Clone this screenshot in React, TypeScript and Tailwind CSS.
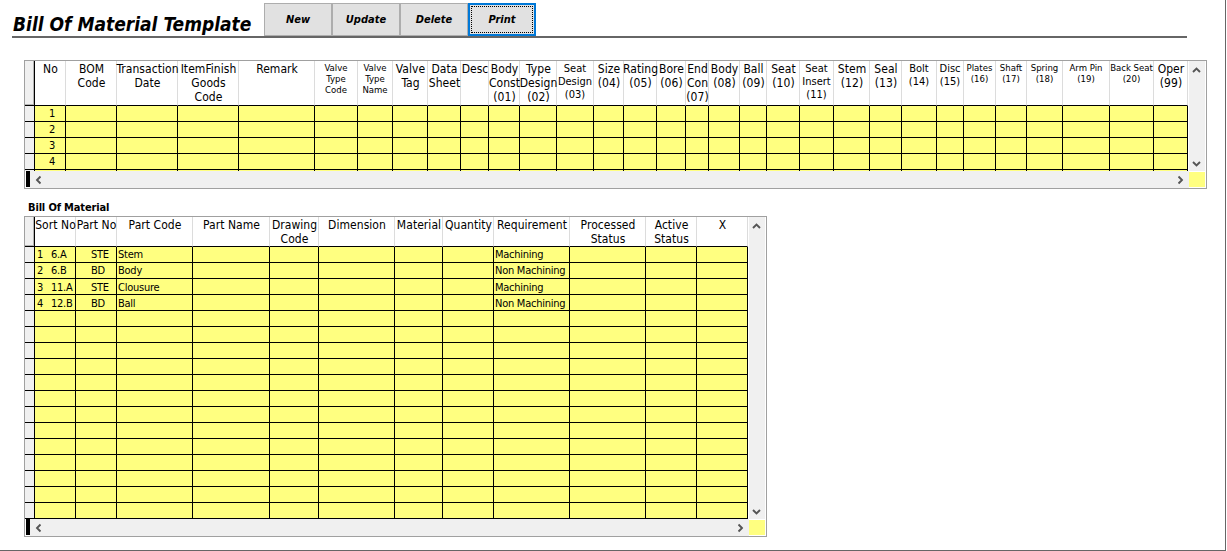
import type { ReactNode } from "react";

type Size = "lg" | "md" | "sm";

interface Column {
  lines: string[];
  size?: Size;
}

const sizeClass: Record<Size, string> = {
  lg: "text-[12px] leading-[14px] tracking-[0.05px] pt-px pl-px",
  md: "text-[11px] leading-[13px] pt-px",
  sm: "text-[9.5px] leading-[11px] pt-px",
};

const templateColumns: Column[] = [
  { lines: ["No"] },
  { lines: ["BOM", "Code"] },
  { lines: ["Transaction", "Date"] },
  { lines: ["ItemFinish", "Goods", "Code"] },
  { lines: ["Remark"] },
  { lines: ["Valve", "Type", "Code"], size: "sm" },
  { lines: ["Valve", "Type", "Name"], size: "sm" },
  { lines: ["Valve", "Tag"] },
  { lines: ["Data", "Sheet"] },
  { lines: ["Desc"] },
  { lines: ["Body", "Const", "(01)"] },
  { lines: ["Type", "Design", "(02)"] },
  { lines: ["Seat", "Design", "(03)"], size: "md" },
  { lines: ["Size", "(04)"] },
  { lines: ["Rating", "(05)"] },
  { lines: ["Bore", "(06)"] },
  { lines: ["End", "Con", "(07)"] },
  { lines: ["Body", "(08)"] },
  { lines: ["Ball", "(09)"] },
  { lines: ["Seat", "(10)"] },
  { lines: ["Seat", "Insert", "(11)"], size: "md" },
  { lines: ["Stem", "(12)"] },
  { lines: ["Seal", "(13)"] },
  { lines: ["Bolt", "(14)"], size: "md" },
  { lines: ["Disc", "(15)"], size: "md" },
  { lines: ["Plates", "(16)"], size: "sm" },
  { lines: ["Shaft", "(17)"], size: "sm" },
  { lines: ["Spring", "(18)"], size: "sm" },
  { lines: ["Arm Pin", "(19)"], size: "sm" },
  { lines: ["Back Seat", "(20)"], size: "sm" },
  { lines: ["Oper", "(99)"] },
];

const materialColumns: Column[] = [
  { lines: ["Sort No"] },
  { lines: ["Part No"] },
  { lines: ["Part Code"] },
  { lines: ["Part Name"] },
  { lines: ["Drawing", "Code"] },
  { lines: ["Dimension"] },
  { lines: ["Material"] },
  { lines: ["Quantity"] },
  { lines: ["Requirement"] },
  { lines: ["Processed", "Status"] },
  { lines: ["Active", "Status"] },
  { lines: ["X"] },
];

const materials = [
  { sort: "1", no: "6.A", kind: "STE", name: "Stem", requirement: "Machining", offset: "" },
  { sort: "2", no: "6.B", kind: "BD", name: "Body", requirement: "Non Machining", offset: "" },
  { sort: "3", no: "11.A", kind: "STE", name: "Clousure", requirement: "Machining", offset: "pt-px" },
  { sort: "4", no: "12.B", kind: "BD", name: "Ball", requirement: "Non Machining", offset: "pt-px" },
];

const templateGrid =
  "grid grid-cols-[10px_31px_51px_61px_61px_76px_43px_35px_35px_33px_28px_31px_37px_37px_30px_33px_29px_23px_31px_27px_33px_34px_36px_32px_35px_27px_32px_31px_36px_47px_44px_34px]";
const materialGrid =
  "grid grid-cols-[10px_41px_41px_76px_77px_49px_76px_48px_51px_76px_76px_51px_51px]";

function Chevron({ turn = "" }: { turn?: string }) {
  return (
    <svg viewBox="0 0 9 6" className={`h-[6px] w-[9px] ${turn}`} fill="none" stroke="#555" strokeWidth="1.9">
      <path d="M1 5 4.5 1.5 8 5" />
    </svg>
  );
}

function HeaderRow({ grid, height, columns }: { grid: string; height: string; columns: Column[] }) {
  return (
    <div className={`${grid} ${height}`}>
      <div className="border-r border-b border-black bg-[#f0f0f0] shadow-[inset_-1px_-1px_0_#b4b4b4]" />
      {columns.map((column, i) => (
        <div
          key={i}
          className={`flex flex-col items-center whitespace-nowrap border-r border-b border-r-[#dcdcdc] border-b-black ${sizeClass[column.size ?? "lg"]}`}
        >
          {column.lines.map((line) => (
            <span key={line}>{line}</span>
          ))}
        </div>
      ))}
    </div>
  );
}

function Row({ grid, count, cells = {}, height = "h-4" }: { grid: string; count: number; cells?: Record<number, ReactNode>; height?: string }) {
  const line = height === "h-4" ? "border-b" : "";
  return (
    <div className={`${grid} ${height}`}>
      <div className={`border-r border-black bg-[#f0f0f0] ${line}`} />
      {Array.from({ length: count }, (_, i) => (
        <div key={i} className={`whitespace-nowrap border-r border-black bg-[#ffff80] text-[11px] leading-[15px] tracking-[-0.25px] ${line}`}>
          {cells[i]}
        </div>
      ))}
    </div>
  );
}

function VerticalBar() {
  return (
    <div className="ml-px flex w-4 flex-col items-center justify-between bg-[#f0f0f0] pt-[6px] pr-px pb-[4px]">
      <Chevron />
      <Chevron turn="rotate-180" />
    </div>
  );
}

function HorizontalBar() {
  return (
    <div className="flex h-[17px] items-start pl-px">
      <div className="h-4 w-1 bg-black" />
      <div className="flex h-full flex-1 items-center justify-between bg-[#f0f0f0] pr-[4px] pl-[4px]">
        <Chevron turn="-rotate-90" />
        <Chevron turn="rotate-90" />
      </div>
      <div className="mt-px mr-px h-[15px] w-4 bg-[#ffff80]" />
    </div>
  );
}

const buttonClass = "h-[33px] w-[68px] border border-[#adadad] bg-[#e1e1e1] pt-px text-[11px] font-bold italic";

export default function App() {
  return (
    <div className="h-[551px] w-[1227px] overflow-hidden bg-white pr-px font-['DejaVu_Sans_Condensed','DejaVu_Sans',sans-serif] text-black [font-stretch:condensed]">
      <main className="h-full border-r border-b border-[#666]">
        <header className="ml-3 flex h-[38px] w-[1175px] border-b-2 border-[#666] pt-[3px]">
          <h1 className="w-[252px] shrink-0 whitespace-nowrap pt-[9px] pl-px text-[19px] leading-6 font-bold italic">Bill Of Material Template</h1>
          <div className="flex h-[33px]">
            <button className={buttonClass}>New</button>
            <button className={buttonClass}>Update</button>
            <button className={buttonClass}>Delete</button>
            <button className="h-[33px] w-[68px] border-2 border-[#0078d7] bg-[#e1e1e1] p-px text-[11px] font-bold italic">
              <span className="flex h-full items-center justify-center border border-dotted border-black pt-[2px]">Print</span>
            </button>
          </div>
        </header>

        <section className="mt-[22px] ml-6 w-[1183px] border border-[#a0a0a0]">
          <div className="flex">
            <div>
              <HeaderRow grid={templateGrid} height="h-[45px]" columns={templateColumns} />
              {[1, 2, 3, 4].map((n) => (
                <Row key={n} grid={templateGrid} count={31} cells={{ 0: <span className="block pl-1 text-center">{n}</span> }} />
              ))}
              <Row grid={templateGrid} count={31} height="h-px" />
            </div>
            <VerticalBar />
          </div>
          <HorizontalBar />
        </section>

        <h2 className="mt-[11px] ml-7 h-4 text-[11px] leading-4 font-bold tracking-[-0.15px]">Bill Of Material</h2>

        <section className="ml-6 w-[743px] border border-[#a0a0a0]">
          <div className="flex">
            <div>
              <HeaderRow grid={materialGrid} height="h-[30px]" columns={materialColumns} />
              {Array.from({ length: 17 }, (_, i) => {
                const item = materials[i];
                const cells = item && {
                  0: (
                    <span className={`flex h-[15px] pl-[2px] ${item.offset}`}>
                      <span className="w-[14px]">{item.sort}</span>
                      {item.no}
                    </span>
                  ),
                  1: <span className={`block h-[15px] pl-[15px] ${item.offset}`}>{item.kind}</span>,
                  2: <span className={`block h-[15px] pl-px ${item.offset}`}>{item.name}</span>,
                  8: <span className={`block h-[15px] pl-px ${item.offset}`}>{item.requirement}</span>,
                };
                return <Row key={i} grid={materialGrid} count={12} cells={cells} />;
              })}
            </div>
            <VerticalBar />
          </div>
          <HorizontalBar />
        </section>
      </main>
    </div>
  );
}
